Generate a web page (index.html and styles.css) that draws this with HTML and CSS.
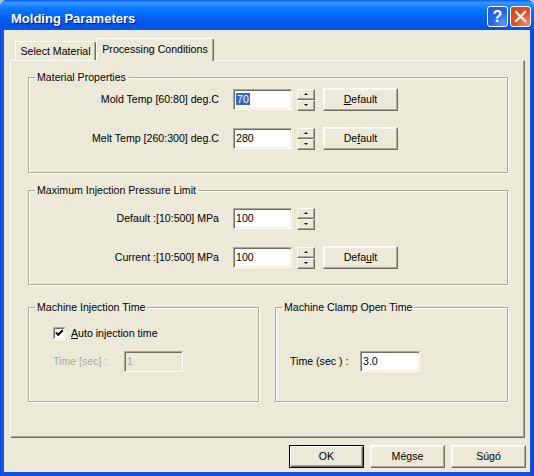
FILE: index.html
```html
<!DOCTYPE html>
<html>
<head>
<meta charset="utf-8">
<link rel="stylesheet" href="styles.css">
</head>
<body>
<div class="window">
  <div class="titlebar">
    <span class="title">Molding Parameters</span>
    <div class="caption-btns">
      <span class="cbtn help">?</span>
      <span class="cbtn close"><svg width="13" height="13" viewBox="0 0 13 13"><path d="M2 2 L11 11 M11 2 L2 11" stroke="#fff" stroke-width="2.2" stroke-linecap="square"/></svg></span>
    </div>
  </div>
  <div class="client">
    <div class="tabs">
      <div class="tab">Select Material</div>
      <div class="tab active">Processing Conditions</div>
    </div>
    <div class="panel">
      <fieldset class="group g1">
        <legend>Material Properties</legend>
        <div class="row">
          <span class="lbl">Mold Temp [60:80] deg.C</span>
          <span class="edit"><span class="sel">70</span></span>
          <span class="spin"><span class="sb"><i class="up"></i></span><span class="sb"><i class="dn"></i></span></span>
          <span class="btn"><u>D</u>efault</span>
        </div>
        <div class="row">
          <span class="lbl">Melt Temp [260:300] deg.C</span>
          <span class="edit">280</span>
          <span class="spin"><span class="sb"><i class="up"></i></span><span class="sb"><i class="dn"></i></span></span>
          <span class="btn">De<u>f</u>ault</span>
        </div>
      </fieldset>
      <fieldset class="group g2">
        <legend>Maximum Injection Pressure Limit</legend>
        <div class="row">
          <span class="lbl">Default :[10:500] MPa</span>
          <span class="edit">100</span>
          <span class="spin"><span class="sb"><i class="up"></i></span><span class="sb"><i class="dn"></i></span></span>
        </div>
        <div class="row">
          <span class="lbl">Current :[10:500] MPa</span>
          <span class="edit">100</span>
          <span class="spin"><span class="sb"><i class="up"></i></span><span class="sb"><i class="dn"></i></span></span>
          <span class="btn">Defa<u>u</u>lt</span>
        </div>
      </fieldset>
      <div class="lower">
        <fieldset class="group g3">
          <legend>Machine Injection Time</legend>
          <div class="gbody">
            <div class="check-row">
              <svg class="chk" width="13" height="13" viewBox="0 0 13 13">
                <rect x="0" y="0" width="13" height="13" fill="#fff"/>
                <path d="M0.5 12.5 V0.5 H12.5" fill="none" stroke="#aca899"/>
                <path d="M1.5 11.5 V1.5 H11.5" fill="none" stroke="#716f64"/>
                <path d="M0.5 12.5 H12.5 V0.5" fill="none" stroke="#ffffff"/>
                <path d="M1.5 11.5 H11.5 V1.5" fill="none" stroke="#f1efe2"/>
                <path d="M3 5.5 L5.2 7.8 L9.8 3.2" fill="none" stroke="#000" stroke-width="2"/>
              </svg>
              <span><u>A</u>uto injection time</span>
            </div>
            <div class="time-row">
              <span class="lbl3 disabled">Time [sec] :</span>
              <span class="edit off">1</span>
            </div>
          </div>
        </fieldset>
        <fieldset class="group g4">
          <legend>Machine Clamp Open Time</legend>
          <div class="gbody">
            <div class="time-row">
              <span class="lbl4">Time (sec ) :</span>
              <span class="edit w60">3.0</span>
            </div>
          </div>
        </fieldset>
      </div>
    </div>
    <div class="footer">
      <span class="btn fbtn default">OK</span>
      <span class="btn fbtn">Mégse</span>
      <span class="btn fbtn">Súgó</span>
    </div>
  </div>
</div>
</body>
</html>
```

FILE: styles.css
```css
* { box-sizing: border-box; }
html, body { margin: 0; padding: 0; }
body {
  width: 534px;
  height: 476px;
  overflow: hidden;
  background: #b9c6dd;
  font: 10.6px/13px "Liberation Sans", Arial, sans-serif;
  color: #000;
}
.window {
  width: 534px;
  height: 476px;
  display: flex;
  flex-direction: column;
  background: linear-gradient(to right, #0a3fd0 0, #1d5ae6 2px, #1550e0 4px, #1550e0 530px, #0b3fd4 534px);
  border-radius: 7px 7px 0 0;
  overflow: hidden;
}
.titlebar {
  height: 30px;
  flex: none;
  display: flex;
  align-items: flex-start;
  padding: 6px 3px 0 11px;
  background: linear-gradient(to bottom, #0058ee 0%, #3a93ff 8%, #288eff 15%, #127dff 25%, #036ffc 40%, #0262ee 60%, #0057e5 80%, #0054e3 90%, #0055eb 100%);
}
.title {
  flex: 1;
  color: #fff;
  font: bold 13px/16px "Liberation Sans", Arial, sans-serif;
  padding-top: 5px;
  text-shadow: 1px 1px #0a1883;
}
.caption-btns { display: flex; gap: 2px; }
.cbtn {
  width: 21px;
  height: 21px;
  border: 1px solid #fff;
  border-radius: 3px;
  display: flex;
  align-items: center;
  justify-content: center;
  color: #fff;
}
.help {
  background: radial-gradient(circle at 80% 85%, #5a9afc 0, #2a66e6 45%, #2058d8 100%);
  font: bold 16px/16px "Liberation Sans", Arial, sans-serif;
}
.close {
  background: radial-gradient(circle at 80% 85%, #f08a6a 0, #e0522c 45%, #d4441e 100%);
}
.client {
  flex: 1;
  margin: 0 4px 4px;
  background: #ece9d8;
  display: flex;
  flex-direction: column;
}
.tabs {
  height: 30px;
  flex: none;
  display: flex;
  align-items: flex-end;
  padding-left: 11px;
}
.tab {
  height: 19px;
  width: 81px;
  display: flex;
  align-items: center;
  justify-content: center;
  border: 1px solid #fff;
  border-right-color: #716f64;
  border-bottom: none;
  border-radius: 2px 2px 0 0;
  box-shadow: inset -1px 0 #aca899;
  background: #ece9d8;
  padding-top: 1px;
}
.tab.active {
  height: 23px;
  width: 118px;
  margin-bottom: -1px;
  position: relative;
  z-index: 1;
  padding-top: 0;
  padding-bottom: 1px;
}
.panel {
  height: 378px;
  flex: none;
  margin: 0 5px 0 6px;
  border: 1px solid;
  border-color: #fff #716f64 #716f64 #fff;
  box-shadow: inset -1px -1px #aca899;
  padding: 10px 16px 0 17px;
}
.group {
  margin: 0;
  padding: 0;
  min-width: 0;
  border: 1px solid #aca899;
  box-shadow: inset 1px 1px #fff, 1px 1px #fff;
}
.group legend {
  margin-left: 6px;
  padding: 0 2px;
  line-height: 12px;
}
.g1 { padding: 5px 0 22px; }
.g2 { padding: 11px 0 15px; margin-top: 11px; }
.row {
  display: flex;
  align-items: center;
  height: 23px;
}
.row + .row { margin-top: 16px; }
.lbl {
  width: 190px;
  margin-right: 14px;
  text-align: right;
}
.edit {
  width: 59px;
  height: 21px;
  background: #fff;
  border: 1px solid;
  border-color: #aca899 #fff #fff #aca899;
  box-shadow: inset 1px 1px #716f64, inset -1px -1px #f1efe2;
  padding: 3px 0 0 2px;
  line-height: 13px;
}
.edit.w60 { width: 60px; }
.edit.off { background: #ece9d8; color: #aca899; }
.sel { background: #316ac5; color: #fff; padding: 0 1px; }
.spin {
  width: 18px;
  height: 22px;
  margin-left: 5px;
  display: flex;
  flex-direction: column;
}
.sb {
  flex: 1;
  display: flex;
  align-items: center;
  justify-content: center;
  border: 1px solid;
  border-color: #fff #716f64 #716f64 #fff;
  box-shadow: inset -1px -1px #aca899;
  background: #ece9d8;
}
.sb i { width: 0; height: 0; border-left: 2px solid transparent; border-right: 2px solid transparent; }
.sb i.up { border-bottom: 2px solid #000; }
.sb i.dn { border-top: 2px solid #000; }
.btn {
  width: 75px;
  height: 23px;
  margin-left: 8px;
  display: flex;
  align-items: center;
  justify-content: center;
  border: 1px solid;
  border-color: #fff #716f64 #716f64 #fff;
  box-shadow: inset -1px -1px #aca899, inset 1px 1px #f7f6f0;
  background: #ece9d8;
}
.lower {
  display: flex;
  gap: 16px;
  margin-top: 16px;
}
.g3 { width: 231px; }
.g4 { width: 233px; }
.g3 .gbody { padding: 14px 0 29px 24px; }
.g4 .gbody { padding: 38px 0 29px 14px; }
.check-row {
  display: flex;
  align-items: center;
  height: 13px;
  gap: 5px;
}
.chk { flex: none; display: block; }
.time-row {
  display: flex;
  align-items: center;
  height: 21px;
}
.check-row + .time-row { margin-top: 11px; }
.lbl3 { width: 71px; }
.lbl4 { width: 70px; }
.disabled { color: #aca899; }
.footer {
  flex: 1;
  display: flex;
  justify-content: flex-end;
  align-items: flex-start;
  gap: 6px;
  padding: 7px 4px 0 0;
}
.fbtn { margin-left: 0; }
.fbtn.default {
  border: 1px solid #000;
  box-shadow: inset 1px 1px #fff, inset -1px -1px #716f64, inset -2px -2px #aca899;
}
```
